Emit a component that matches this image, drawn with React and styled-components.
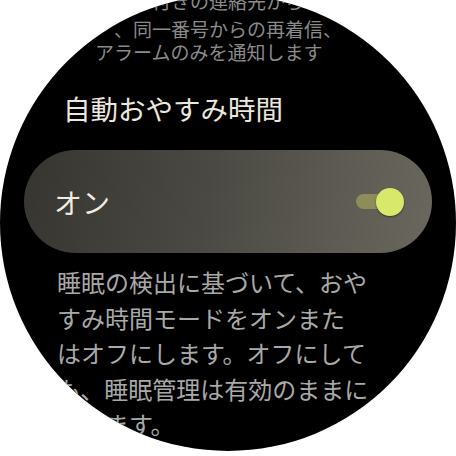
import React from 'react';
import styled, { createGlobalStyle } from 'styled-components';

const GlobalStyle = createGlobalStyle`
  html, body {
    margin: 0;
    padding: 0;
    background: #ffffff;
  }

  body {
    font-family: "Noto Sans CJK JP", "Noto Sans", sans-serif;
  }
`;

const Screen = styled.div`
  width: 456px;
  height: 456px;
  background: #000000;
  overflow: hidden;
  clip-path: circle(228px at 228px 223px);
`;

const Column = styled.div`
  display: flex;
  flex-direction: column;
`;

const FadedNote = styled.p`
  margin: -11.5px 0 0;
  padding-left: 95px;
  font-size: 19px;
  line-height: 23px;
  color: #8b8b8b;
  white-space: nowrap;
`;

const Line = styled.span`
  display: block;
  padding-left: ${(p) => p.$indent || 0}px;
  margin-bottom: ${(p) => p.$gap || 0}px;
`;

const SectionTitle = styled.h2`
  margin: 27px 0 24px;
  padding-left: 63px;
  font-size: 27.5px;
  line-height: 36px;
  font-weight: 400;
  color: #ece7de;
`;

const ToggleChip = styled.div`
  margin: 0 24px;
  height: 103px;
  border-radius: 52px;
  background: linear-gradient(100deg, #37352f 0%, #4a4943 45%, #5c5a52 75%, #6a675e 100%);
  display: flex;
  align-items: center;
  justify-content: space-between;
  padding: 0 28px 0 30px;
`;

const ChipLabel = styled.span`
  font-size: 28px;
  line-height: 36px;
  color: #f1ece3;
`;

const Switch = styled.div`
  position: relative;
  width: 48px;
  height: 28px;
  display: flex;
  align-items: center;
`;

const Track = styled.div`
  width: 42px;
  height: 15px;
  border-radius: 8px;
  background: ${(p) => (p.$on ? '#8c8d58' : '#5a5a5a')};
`;

const Thumb = styled.div`
  position: absolute;
  top: 0;
  right: 0;
  width: 28px;
  height: 28px;
  border-radius: 50%;
  background: ${(p) => (p.$on ? '#d8e86a' : '#bdbdbd')};
  box-shadow: 0 1px 2px rgba(0, 0, 0, 0.45);
`;

const Description = styled.p`
  margin: 11px 0 0;
  padding-left: 57px;
  font-size: 24px;
  line-height: 35.5px;
  color: #a9a9a9;
  white-space: nowrap;
`;

const noteLines = [
  { text: 'スター付きの連絡先からの通', gap: 5.5 },
  { text: '、同一番号からの再着信、', indent: 19 },
  { text: 'アラームのみを通知します' },
];

const descriptionLines = [
  '睡眠の検出に基づいて、おや',
  'すみ時間モードをオンまた',
  'はオフにします。オフにして',
  'も、睡眠管理は有効のままに',
  'なります。',
];

export default function App() {
  return (
    <>
      <GlobalStyle />
      <Screen>
        <Column>
          <FadedNote>
            {noteLines.map((l) => (
              <Line key={l.text} $indent={l.indent} $gap={l.gap}>
                {l.text}
              </Line>
            ))}
          </FadedNote>
          <SectionTitle>自動おやすみ時間</SectionTitle>
          <ToggleChip>
            <ChipLabel>オン</ChipLabel>
            <Switch>
              <Track $on />
              <Thumb $on />
            </Switch>
          </ToggleChip>
          <Description>
            {descriptionLines.map((l) => (
              <Line key={l}>{l}</Line>
            ))}
          </Description>
        </Column>
      </Screen>
    </>
  );
}
